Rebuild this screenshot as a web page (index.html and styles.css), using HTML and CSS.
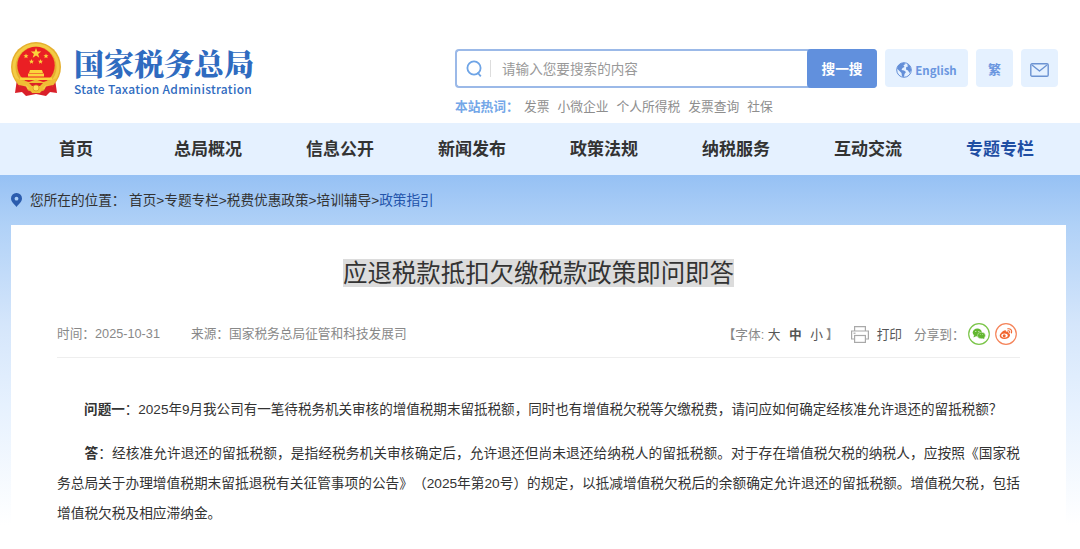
FILE: index.html
```
<!DOCTYPE html>
<html lang="zh-CN">
<head>
  <meta charset="UTF-8">
  <meta name="viewport" content="width=device-width, initial-scale=1.0">
  <title>应退税款抵扣欠缴税款政策即问即答</title>
  <link rel="stylesheet" href="styles.css">
</head>
<body>
  <!-- Header -->
  <header class="header">
    <a class="logo">
      <svg class="emblem" width="52" height="56" viewBox="0 0 52 56">
        <path d="M7 38 L5 52 L12 51 L16 55 L26 53 L36 55 L40 51 L47 52 L45 38 Z" fill="#d9202a"/>
        <circle cx="26" cy="26" r="25" fill="#e6b02f"/>
        <circle cx="26" cy="26" r="22" fill="none" stroke="#f3cc45" stroke-width="3"/>
        <circle cx="26" cy="24.500" r="18.700" fill="#ea1f24"/>
        <g fill="#fbd43c">
          <path d="M26 7l1.300 3.600h3.900l-3.100 2.400 1.200 3.800-3.300-2.300-3.300 2.300 1.200-3.800-3.100-2.400h3.900z"/>
          <path d="M16 12.500l.7 1.700h1.800l-1.400 1.200.5 1.800-1.600-1-1.600 1 .5-1.800-1.400-1.200h1.800z"/>
          <path d="M36 12.500l.7 1.700h1.800l-1.400 1.200.5 1.800-1.600-1-1.600 1 .5-1.800-1.400-1.200h1.800z"/>
          <path d="M21.500 18l.7 1.700h1.800l-1.400 1.200.5 1.800-1.600-1-1.600 1 .5-1.800-1.400-1.200h1.800z"/>
          <path d="M30.500 18l.7 1.700h1.800l-1.400 1.200.5 1.800-1.600-1-1.600 1 .5-1.800-1.400-1.200h1.800z"/>
          <path d="M20 29h12l1 3h-14zM18 32.500h16v3H18zM10 36.500h32v2.500H10z"/>
        </g>
        <path d="M5 37 Q12 40 19 41 L26 38.500 L33 41 Q40 40 47 37 L42 46 L35 44 L30 52 H22 L17 44 L10 46Z" fill="#f0bd35"/>
        <path d="M19 42h14l-3 3h-8z" fill="#dc2029"/>
        <circle cx="26" cy="47" r="3" fill="#ffe05a" stroke="#d99820" stroke-width=".8"/>
        <path d="M9 44l7 1.500 3 6-8-.500zM43 44l-7 1.500-3 6 8-.500z" fill="#dc2029"/>
      </svg>
      <div class="logo-text">
        <div class="logo-cn">国家税务总局</div>
        <div class="logo-en">State Taxation Administration</div>
      </div>
    </a>

    <div class="header-right">
      <div class="tools">
        <div class="search">
          <svg class="search-icon" width="17" height="18" viewBox="0 0 17 18" fill="none" stroke="#6ea4e6" stroke-width="1.800">
            <circle cx="8" cy="8" r="6.600"/>
            <path d="M11.500 12.500l3.300 3.800"/>
          </svg>
          <span class="search-hint">请输入您要搜索的内容</span>
          <button class="search-btn">搜一搜</button>
        </div>
        <a class="tool tool-en">
          <svg width="16" height="16" viewBox="0 0 16 16">
            <circle cx="8" cy="8" r="7.300" fill="#e5f1ff" stroke="#648fd8" stroke-width="1"/>
            <path d="M2 3.500Q4.500.4 8 .7L9.500 2 7.500 3.300 8.500 5 6.500 6 5.500 8 8 8.500 10 10 8.500 12 8 15 6 14.500 5.500 11 3.500 9 1 6.500ZM11 2l3 2 1.300 4-1.800 3-1.500-2.500-2-1 .2-2.500 1.800-.5z" fill="#648fd8"/>
          </svg>
          <span>English</span>
        </a>
        <a class="tool tool-fan">繁</a>
        <a class="tool tool-mail">
          <svg width="19" height="14" viewBox="0 0 19 14" fill="none" stroke="#6c93d2" stroke-width="1.400" stroke-linejoin="round">
            <rect x=".8" y=".8" width="17.400" height="12.400" rx="1.200"/>
            <path d="M2 2l7.500 6L17 2"/>
          </svg>
        </a>
      </div>
      <div class="hot-words">
        <strong>本站热词：</strong>
        <a>发票</a>
        <a>小微企业</a>
        <a>个人所得税</a>
        <a>发票查询</a>
        <a>社保</a>
      </div>
    </div>
  </header>

  <!-- Navigation -->
  <nav class="nav">
    <a>首页</a>
    <a>总局概况</a>
    <a>信息公开</a>
    <a>新闻发布</a>
    <a>政策法规</a>
    <a>纳税服务</a>
    <a>互动交流</a>
    <a class="active">专题专栏</a>
  </nav>

  <!-- Content -->
  <main class="main">
    <div class="crumbs">
      <svg width="11" height="14" viewBox="0 0 11 14">
        <path d="M5.500 0A5.400 5.400 0 0 0 0 5.400C0 8.500 3 10.500 5.500 14 8 10.500 11 8.500 11 5.400A5.400 5.400 0 0 0 5.500 0Z" fill="#2b5cae"/>
        <circle cx="5.500" cy="5.700" r="1.900" fill="#a9cdf7"/>
      </svg>
      <span class="crumbs-label">您所在的位置：</span>
      <span>首页&gt;专题专栏&gt;税费优惠政策&gt;培训辅导&gt;<a class="current">政策指引</a></span>
    </div>

    <article class="article">
      <h1><span>应退税款抵扣欠缴税款政策即问即答</span></h1>

      <div class="meta">
        <span class="date">时间：2025-10-31</span>
        <span class="source">来源：国家税务总局征管和科技发展司</span>
        <div class="actions">
          <span class="font-size">【字体: <a>大</a> <a class="on">中</a> <a>小</a>】</span>
          <svg class="printer" width="18" height="17" viewBox="0 0 18 17" fill="none" stroke="#a9a9a9" stroke-width="1.200">
            <path d="M3.600 5V.6h10.800V5M3.600 13H.6V5h16.800v8h-3"/>
            <rect x="3.600" y="9.500" width="10.800" height="6.900"/>
            <path d="M2.500 7.200h2"/>
          </svg>
          <a class="print">打印</a>
          <span class="share-label">分享到：</span>
          <svg class="share" width="22" height="22" viewBox="0 0 22 22">
            <circle cx="11" cy="11" r="10.300" fill="#fff" stroke="#7bc549" stroke-width="1.200"/>
            <ellipse cx="9.300" cy="9.500" rx="4.600" ry="3.900" fill="#62b72f"/>
            <path d="M6 12l-.5 2.500 3-1.500z" fill="#62b72f"/>
            <ellipse cx="13.400" cy="12.500" rx="4" ry="3.300" fill="#62b72f" stroke="#fff" stroke-width=".4"/>
            <path d="M14 15l2.300 1-.4-2.200z" fill="#62b72f"/>
            <g fill="#fff"><circle cx="7.800" cy="8.500" r=".5"/><circle cx="10.900" cy="8.500" r=".5"/><circle cx="12.200" cy="11.700" r=".4"/><circle cx="14.700" cy="11.700" r=".4"/></g>
          </svg>
          <svg class="share" width="22" height="22" viewBox="0 0 22 22">
            <circle cx="11" cy="11" r="10.300" fill="#fff" stroke="#f5845a" stroke-width="1.200"/>
            <path d="M9.500 7.500c1-.4 1.700.2 1.400 1.200 1.500-.5 2.900-.2 2.600 1.200 3.300 1.500 1.100 6-4 6-3 0-4.800-1.300-4.800-3.200 0-1.800 2.600-4.500 4.800-5.200z" fill="#f1662f"/>
            <ellipse cx="9.500" cy="12.600" rx="3.200" ry="2" fill="#fff"/>
            <circle cx="9.200" cy="12.700" r="1.500" fill="#f1662f"/>
            <path d="M12.800 5.800c2.700-.5 4.500 1.500 3.700 4.100M13 7.800c1.300-.2 2 .6 1.700 1.800" fill="none" stroke="#f1662f" stroke-width="1.100" stroke-linecap="round"/>
          </svg>
        </div>
      </div>

      <div class="text">
        <p class="question"><strong>问题一</strong>：2025年9月我公司有一笔待税务机关审核的增值税期末留抵税额，同时也有增值税欠税等欠缴税费，请问应如何确定经核准允许退还的留抵税额？</p>
        <p><strong>答</strong>：经核准允许退还的留抵税额，是指经税务机关审核确定后，允许退还但尚未退还给纳税人的留抵税额。对于存在增值税欠税的纳税人，应按照《国家税务总局关于办理增值税期末留抵退税有关征管事项的公告》（2025年第20号）的规定，以抵减增值税欠税后的余额确定允许退还的留抵税额。增值税欠税，包括增值税欠税及相应滞纳金。</p>
      </div>
    </article>
  </main>
</body>
</html>
```
FILE: styles.css
```
* {
  box-sizing: border-box;
}

body {
  margin: 0;
  height: 549px;
  overflow: hidden;
  display: flex;
  flex-direction: column;
  font-family: "Liberation Sans", "Noto Sans CJK SC", sans-serif;
  color: #333;
  background: #fff;
  text-spacing-trim: space-all;
}

/* header */
.header {
  height: 123px;
  flex: none;
  display: flex;
  justify-content: space-between;
  padding: 41px 22px 0 10px;
  font-family: "Noto Sans CJK SC", sans-serif;
}

.logo {
  display: flex;
  gap: 12px;
}

.logo-text {
  padding-top: 2px;
  color: #2f6bc0;
}

.logo-cn {
  font-family: "Noto Serif CJK SC", "Noto Sans CJK SC", serif;
  font-size: 30px;
  font-weight: 900;
  line-height: 38px;
  white-space: nowrap;
}

.logo-en {
  margin-top: 1px;
  font-size: 12px;
  font-weight: 500;
  line-height: 14px;
  letter-spacing: 0.3px;
  white-space: nowrap;
}

.header-right {
  width: 603px;
  padding-top: 8px;
}

.tools {
  display: flex;
  gap: 8px;
}

.search {
  width: 422px;
  height: 39px;
  display: flex;
  align-items: center;
  border: 2px solid #9bb9e8;
  border-right: none;
  border-radius: 4px;
  padding-left: 9px;
}

.search-hint {
  flex: 1;
  margin-left: 7px;
  padding-left: 11px;
  border-left: 1px solid #ddd;
  font-size: 13.6px;
  line-height: 17px;
  color: #999;
}

.search-btn {
  width: 70px;
  height: 39px;
  border: none;
  border-radius: 4px;
  background: #6190dd;
  color: #fff;
  font-family: inherit;
  font-size: 13.7px;
  font-weight: bold;
  padding: 0 0 2px;
}

.tool {
  height: 38px;
  display: flex;
  align-items: center;
  justify-content: center;
  border-radius: 4px;
  background: #e5f1ff;
  color: #6a96df;
  font-weight: bold;
}

.tool-en {
  width: 83px;
  gap: 3px;
  padding-top: 3px;
  font-size: 11.5px;
}

.tool-fan {
  width: 37px;
  font-size: 13px;
}

.tool-mail {
  width: 37px;
  padding-top: 4px;
}

.hot-words {
  display: flex;
  gap: 8px;
  margin-top: 8px;
  font-size: 12.75px;
  line-height: 19px;
  color: #8e8e8e;
  white-space: nowrap;
}

.hot-words strong {
  width: 61px;
  color: #74a7e8;
}

/* navigation */
.nav {
  height: 52px;
  flex: none;
  display: grid;
  grid-template-columns: repeat(8, 132px);
  padding-left: 10px;
  background: #e5f1ff;
  font-family: "Noto Sans CJK SC", sans-serif;
  font-size: 17px;
  font-weight: bold;
  line-height: 49px;
  text-align: center;
}

.nav .active {
  color: #1f4ea3;
}

/* content */
.main {
  flex: 1;
  padding: 0 14px 0 11px;
  background: linear-gradient(#96c1f4 0, #b0d1f7 50px, #d5e6fb 150px, #e6f1fe 230px, #fff 350px);
}

.crumbs {
  height: 50px;
  display: flex;
  align-items: center;
  font-size: 13.65px;
}

.crumbs span {
  padding-bottom: 2px;
}

.crumbs-label {
  width: 99px;
  margin-left: 8px;
}

.crumbs .current {
  color: #2354ab;
}

.article {
  height: 324px;
  padding: 34px 46px 0;
  background: #fff;
}

h1 {
  margin: 0;
  font-size: 24.45px;
  font-weight: normal;
  line-height: 28px;
  text-align: center;
}

h1 span {
  display: inline-block;
  height: 28px;
  line-height: 30px;
  background: #dcdcdc;
}

.meta {
  height: 70px;
  display: flex;
  align-items: center;
  padding-top: 21px;
  border-bottom: 1px solid #eee;
  font-size: 12.7px;
  color: #888;
}

.date,
.source {
  padding-bottom: 2px;
}

.date {
  width: 134px;
}

.actions {
  display: flex;
  align-items: center;
  margin-left: auto;
  padding: 1px 3px 0 0;
}

.font-size a,
.print {
  color: #555;
}

.font-size a {
  margin-right: 5px;
}

.font-size a:last-child {
  margin-right: 3px;
}

.font-size .on {
  font-weight: bold;
}

.printer {
  margin: 2px 8px 0 12px;
}

.share-label {
  width: 54px;
  margin-left: 12px;
}

.share + .share {
  margin-left: 5px;
}

.text {
  padding-top: 37px;
  font-size: 13.7px;
  line-height: 30px;
}

.text p {
  margin: 0 0 14px;
  text-indent: 2em;
  text-align: justify;
}

.text .question {
  font-size: 13.55px;
}
```
